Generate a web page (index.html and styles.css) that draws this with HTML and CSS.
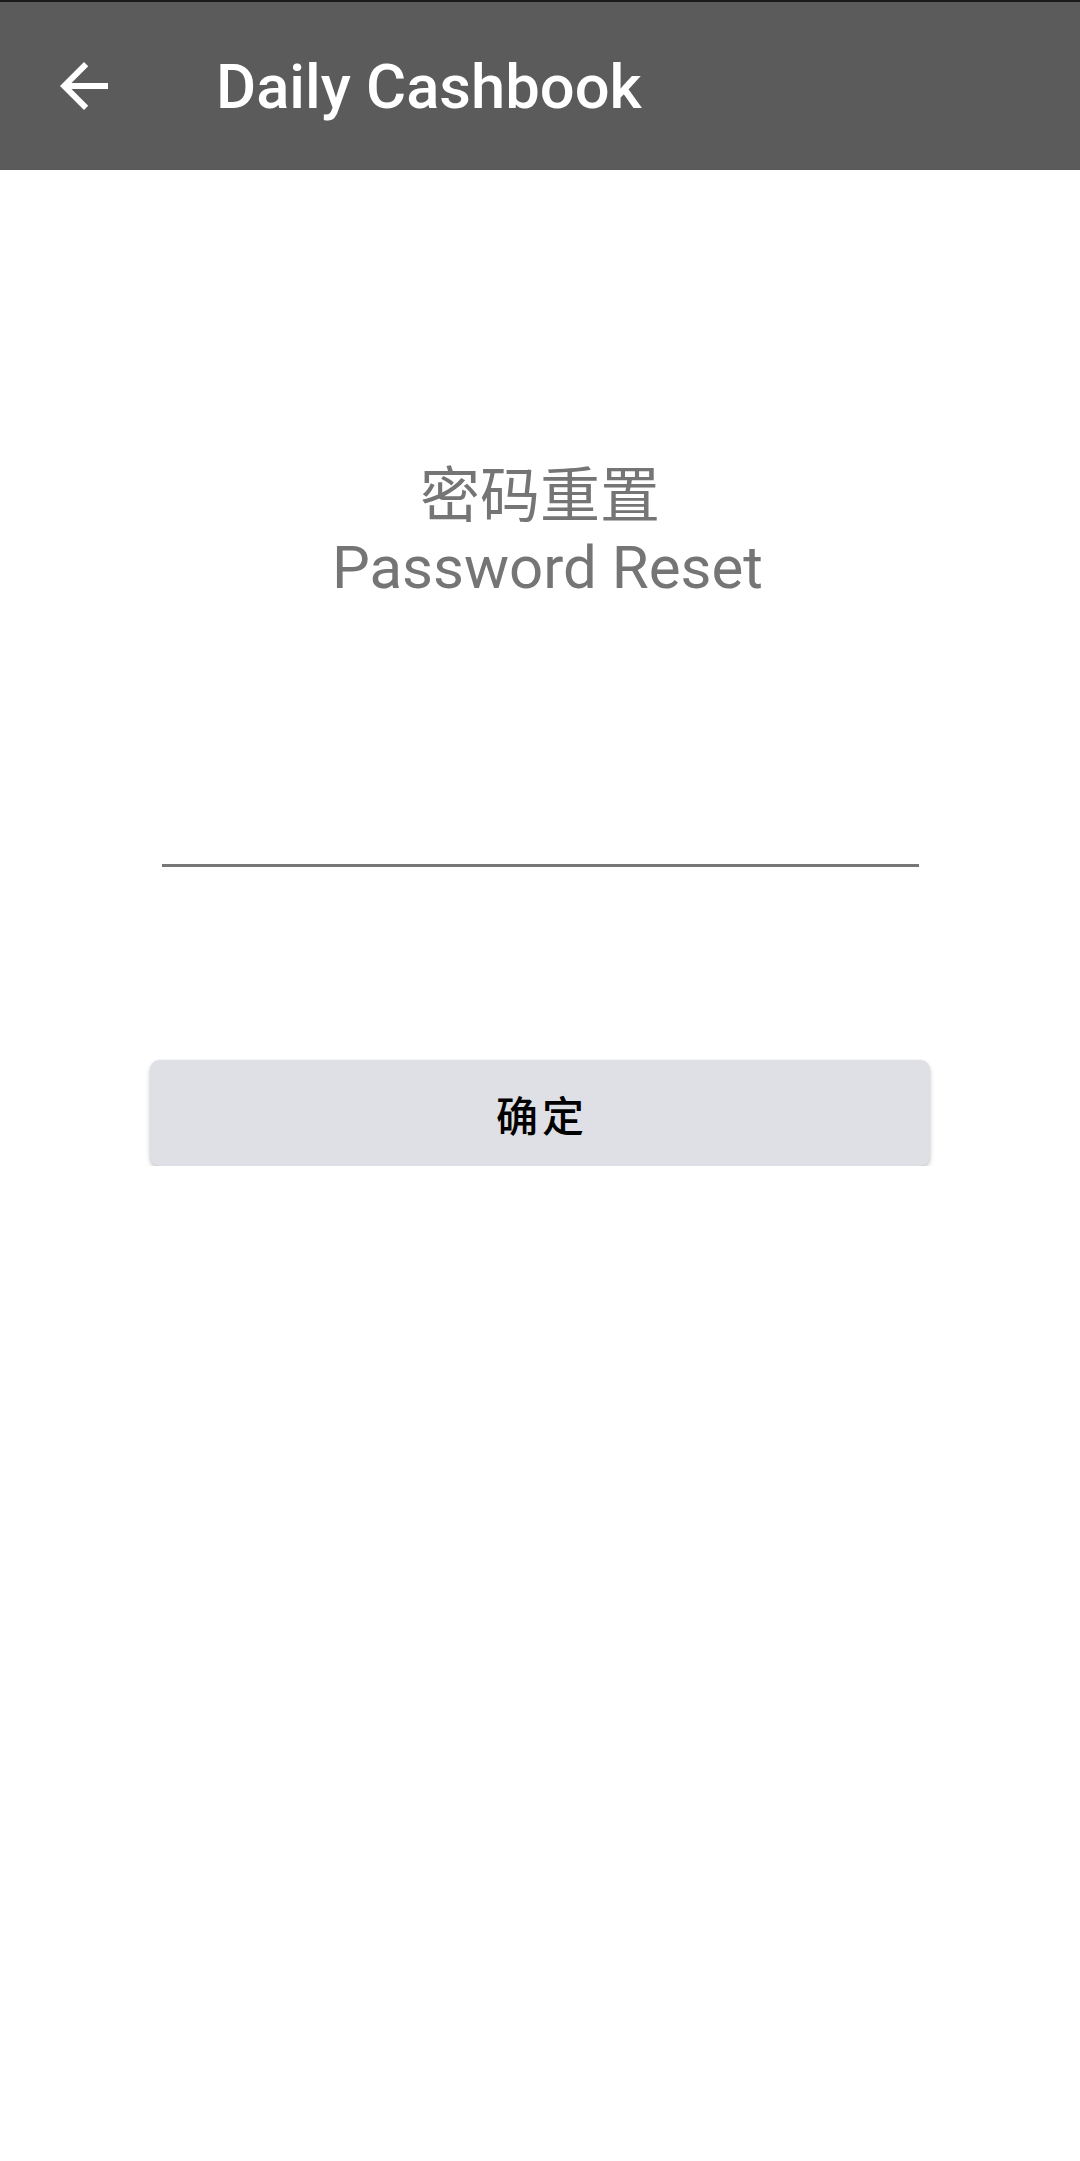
FILE: index.html
```html
<!DOCTYPE html>
<html lang="zh">
<head>
<meta charset="utf-8">
<title>Daily Cashbook</title>
<link rel="stylesheet" href="styles.css">
</head>
<body>
<header class="toolbar">
  <div class="nav-btn">
    <svg class="nav-icon" viewBox="0 0 24 24" width="72" height="72">
      <path d="M20 11H7.83l5.59-5.59L12 4l-8 8 8 8 1.41-1.41L7.83 13H20v-2z" fill="#ffffff"/>
    </svg>
  </div>
  <div class="title">Daily Cashbook</div>
</header>
<main class="content">
  <div class="heading">
    <div class="heading-line">密码重置</div>
    <div class="heading-line">&nbsp;Password Reset</div>
  </div>
  <div class="field"></div>
  <button class="confirm">确定</button>
</main>
</body>
</html>
```
FILE: styles.css
```css
html, body {
  margin: 0;
  padding: 0;
  background: #ffffff;
  font-family: Roboto, "Noto Sans CJK SC", sans-serif;
}

.toolbar {
  height: 168px;
  border-top: 2px solid #1a1a1a;
  background: #5b5b5b;
  display: flex;
  align-items: center;
}

.nav-btn {
  flex: 0 0 168px;
  height: 168px;
  display: flex;
  align-items: center;
  justify-content: center;
}

.nav-icon {
  display: block;
}

.title {
  color: #ffffff;
  font-family: Roboto, sans-serif;
  font-weight: 500;
  font-size: 61.5px;
  margin-left: 48px;
  margin-top: 2px;
}

.content {
  display: flex;
  flex-direction: column;
  align-items: center;
  padding-top: 291px;
}

.heading {
  text-align: center;
  color: #757575;
  font-size: 60px;
  line-height: 71px;
  font-family: Roboto, "Noto Sans CJK SC", sans-serif;
}

.field {
  margin-top: 201px;
  width: 757px;
  height: 60px;
  border-bottom: 3px solid #777777;
}

.confirm {
  margin-top: 193px;
  width: 780px;
  height: 106px;
  border: none;
  border-radius: 10px;
  background: #dfe0e5;
  box-shadow: 0 3px 5px rgba(0, 0, 0, 0.2), 0 0 2px rgba(0, 0, 0, 0.1);
  color: #000000;
  font-family: "Noto Sans CJK SC", sans-serif;
  font-weight: 500;
  font-size: 42px;
  letter-spacing: 4px;
  text-indent: 4px;
  padding: 0;
}
```
